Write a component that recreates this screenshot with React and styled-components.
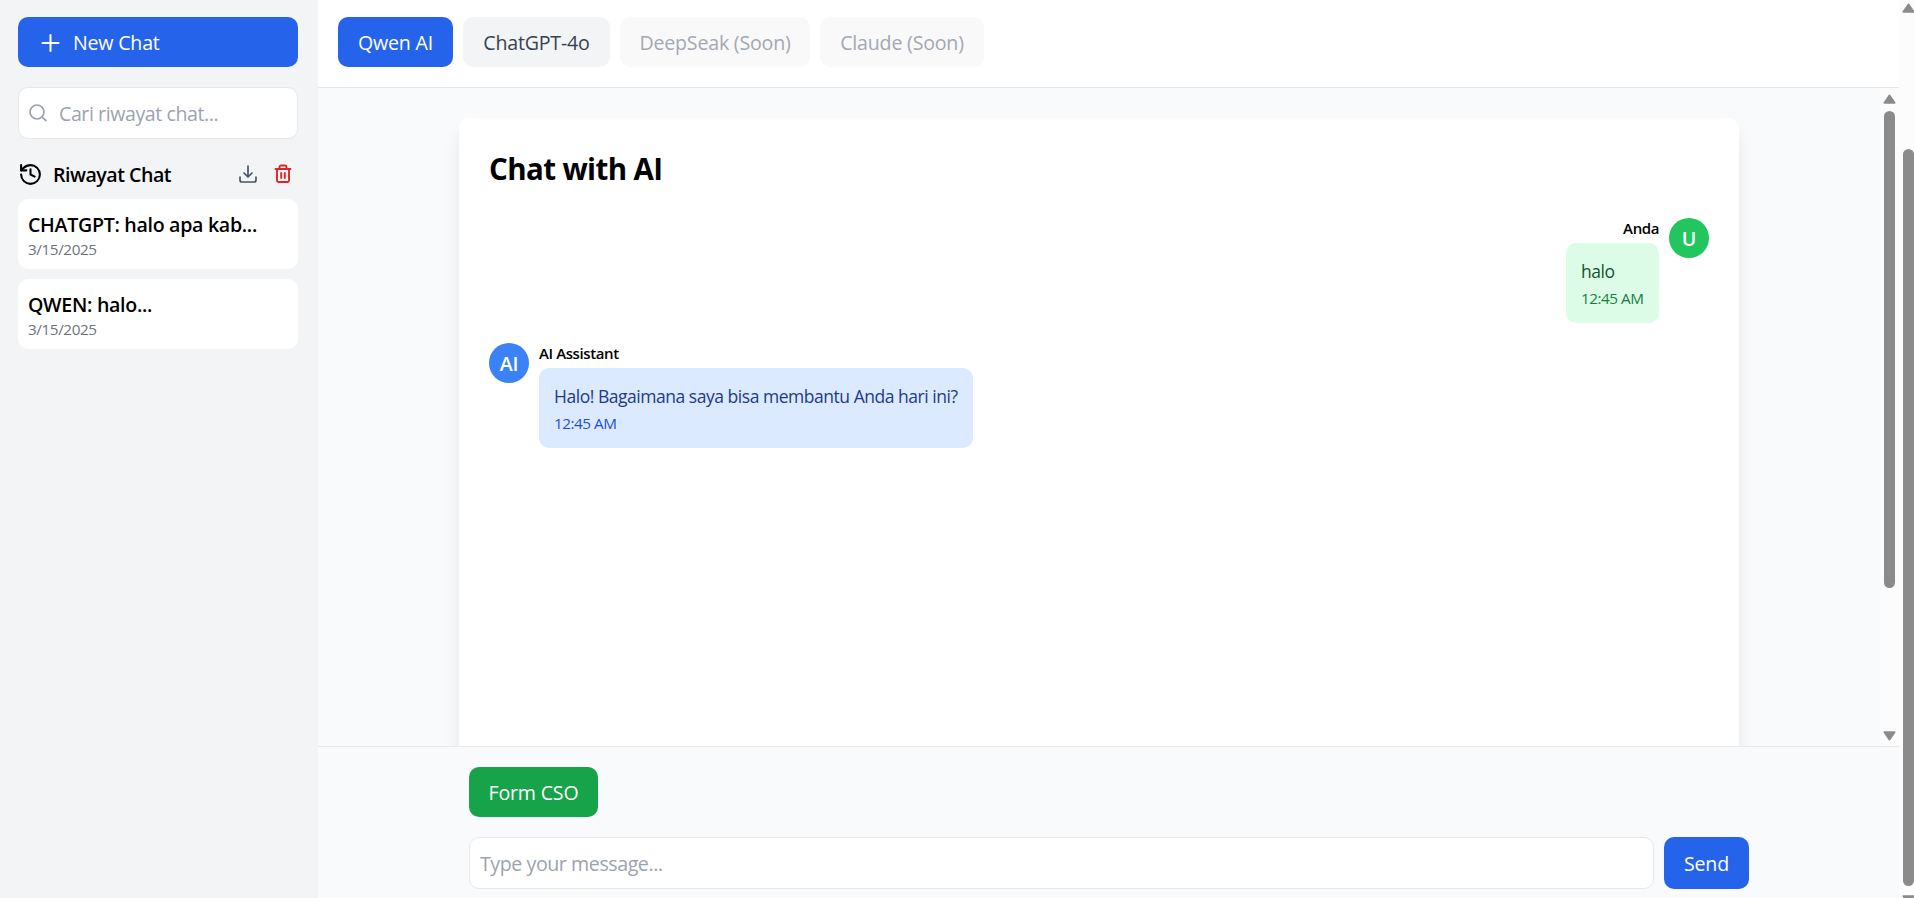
import React from 'react';
import styled, { createGlobalStyle } from 'styled-components';
import { LuHistory } from 'react-icons/lu';

const GlobalStyle = createGlobalStyle`
  *, *::before, *::after { box-sizing: border-box; }
  body { margin: 0; font-family: "Segoe UI", "Open Sans", "Noto Sans", sans-serif; font-size: 19.6px; letter-spacing: -0.2px; line-height: 1.5; color: #000; overflow: hidden; }
  button, input { font: inherit; letter-spacing: inherit; }
  h1, p { margin: 0; }
`;

const Page = styled.div`
  display: flex;
  height: 898px;
  background: #f9fafb;
`;

const Sidebar = styled.aside`
  width: 318px;
  flex: none;
  padding: 17px 20px 0 18px;
  background: #f3f4f6;
`;

const NewChatButton = styled.button`
  display: flex;
  align-items: center;
  gap: 13px;
  width: 280px;
  height: 50px;
  padding: 1px 22px 0;
  border: 0;
  border-radius: 10px;
  background: #2563eb;
  color: #fff;
  text-align: left;
`;

const SearchBox = styled.label`
  display: flex;
  align-items: center;
  gap: 11px;
  width: 280px;
  height: 52px;
  margin-top: 20px;
  padding: 0 9px;
  border: 1px solid #e5e7eb;
  border-radius: 10px;
  background: #fff;
  color: #9ca3af;
`;

const PlainInput = styled.input`
  flex: 1;
  min-width: 0;
  padding: 2px 0 0;
  border: 0;
  outline: 0;
  background: transparent;
  letter-spacing: -0.43px;
  &::placeholder { color: #9ca3af; opacity: 1; }
`;

const HistoryHeader = styled.div`
  display: flex;
  align-items: center;
  height: 40px;
  margin-top: 15px;
  padding-right: 5px;
`;

const HistoryTitle = styled.span`
  flex: 1;
  margin-left: 10px;
  padding-top: 2px;
  font-weight: 600;
  letter-spacing: -0.5px;
`;

const IconButton = styled.button`
  display: flex;
  width: 20px;
  height: 20px;
  margin-left: 15px;
  padding: 0;
  border: 0;
  background: none;
  color: ${(p) => p.$color};
`;

const HistoryList = styled.div`
  display: flex;
  flex-direction: column;
  gap: 10px;
  margin-top: 5px;
`;

const HistoryItem = styled.div`
  width: 280px;
  height: 70px;
  padding: 12px 10px 0;
  border-radius: 10px;
  background: #fff;
`;

const ItemTitle = styled.div`
  font-weight: 600;
  line-height: 28px;
  letter-spacing: -0.3px;
`;

const ItemDate = styled.div`
  font-size: 15.3px;
  line-height: 20px;
  letter-spacing: -0.42px;
  color: #6b7280;
`;

const Main = styled.main`
  flex: 1;
  min-width: 0;
  display: flex;
  flex-direction: column;
`;

const ModelBar = styled.nav`
  display: flex;
  gap: 10px;
  height: 88px;
  flex: none;
  padding: 17px 20px 0;
  border-bottom: 1px solid #e5e7eb;
  background: #fff;
`;

const ModelButton = styled.button`
  width: ${(p) => p.$width}px;
  height: 50px;
  padding: 2px 0 0;
  border: 0;
  border-radius: 10px;
  white-space: nowrap;
  background: ${(p) => (p.$active ? '#2563eb' : p.disabled ? '#f9f9f9' : '#f3f4f6')};
  color: ${(p) => (p.$active ? '#fff' : p.disabled ? '#a3a8b2' : '#374151')};
`;

const ScrollArea = styled.section`
  display: flex;
  flex: 1;
  min-height: 0;
  overflow: hidden;
`;

const ChatColumn = styled.div`
  flex: 1;
  padding: 30px 141px 0;
  overflow: hidden;
`;

const ChatCard = styled.div`
  width: 1280px;
  height: 720px;
  padding: 30px;
  border-radius: 10px;
  background: #fff;
  box-shadow: 0 12.5px 18.75px -3.75px rgba(0,0,0,.1), 0 5px 7.5px -5px rgba(0,0,0,.1);
`;

const Title = styled.h1`
  padding-top: 1px;
  font-size: 29.5px;
  line-height: 40px;
  font-weight: 700;
  height: 40px;
  letter-spacing: -0.6px;
`;

const Message = styled.article`
  display: flex;
  flex-direction: ${(p) => (p.$own ? 'row-reverse' : 'row')};
  gap: 10px;
  height: 105px;
  margin-top: ${(p) => (p.$own ? 30 : 20)}px;
`;

const Avatar = styled.div`
  display: flex;
  align-items: center;
  justify-content: center;
  width: 40px;
  height: 40px;
  padding-top: 1px;
  border-radius: 50%;
  background: ${(p) => (p.$own ? '#22c55e' : '#3b82f6')};
  color: #fff;
  font-weight: 600;
`;

const MessageBody = styled.div`
  display: flex;
  flex-direction: column;
  align-items: ${(p) => (p.$own ? 'flex-end' : 'flex-start')};
`;

const Sender = styled.div`
  height: 25px;
  font-size: 15px;
  line-height: 21px;
  font-weight: 600;
  letter-spacing: -0.4px;
`;

const Bubble = styled.div`
  width: ${(p) => (p.$own ? 93 : 434)}px;
  height: 80px;
  padding: 14px 15px 0;
  border-radius: 10px;
  white-space: nowrap;
  background: ${(p) => (p.$own ? '#dcfce7' : '#dbeafe')};
  color: ${(p) => (p.$own ? '#14532d' : '#1e3a8a')};
`;

const BubbleText = styled.p`
  font-size: 17.5px;
  line-height: 28px;
  letter-spacing: -0.47px;
`;

const BubbleTime = styled.p`
  margin-top: 3px;
  font-size: 15.3px;
  line-height: 20px;
  letter-spacing: -0.48px;
  color: ${(p) => (p.$own ? '#15803d' : '#1d4ed8')};
`;

const ScrollTrack = styled.div`
  display: flex;
  flex-direction: column;
  align-items: center;
  flex: none;
  width: ${(p) => (p.$outer ? 15 : 19)}px;
  padding-top: ${(p) => (p.$outer ? 3 : 6)}px;
  padding-left: ${(p) => (p.$outer ? 4 : 0)}px;
  background: #fcfcfc;
  overflow: hidden;
`;

const ScrollThumb = styled.div`
  flex: none;
  width: 11px;
  height: ${(p) => p.$height}px;
  margin: ${(p) => p.$before}px 0 ${(p) => p.$after}px;
  border-radius: 6px;
  background: #8b8b8b;
`;

const ArrowIcon = styled.svg`
  flex: none;
`;

const Composer = styled.footer`
  flex: none;
  height: 152px;
  padding: 20px 0 0 151px;
  border-top: 1px solid #e5e7eb;
`;

const FormButton = styled.button`
  display: block;
  width: 129px;
  height: 50px;
  padding: 2px 0 0;
  border: 0;
  border-radius: 10px;
  background: #16a34a;
  color: #fff;
`;

const ComposeRow = styled.div`
  display: flex;
  gap: 10px;
  margin-top: 20px;
`;

const MessageField = styled.label`
  display: flex;
  align-items: center;
  width: 1185px;
  height: 52px;
  padding: 0 10px;
  border: 1px solid #e5e7eb;
  border-radius: 10px;
  background: #fff;
`;

const SendButton = styled.button`
  width: 85px;
  height: 52px;
  padding: 2px 0 0;
  border: 0;
  border-radius: 10px;
  background: #2563eb;
  color: #fff;
`;

const models = [
  { name: 'Qwen AI', width: 115, active: true },
  { name: 'ChatGPT-4o', width: 147 },
  { name: 'DeepSeak (Soon)', width: 190, disabled: true },
  { name: 'Claude (Soon)', width: 164, disabled: true },
];

const history = [
  { title: 'CHATGPT: halo apa kab...', date: '3/15/2025' },
  { title: 'QWEN: halo...', date: '3/15/2025' },
];

const Arrow = ({ down }) => (
  <ArrowIcon width="13" height="10" viewBox="0 0 13 10">
    <path
      d={down ? 'M1.500 1.200h10L6.500 8.500z' : 'M1.500 8.800h10L6.500 1.500z'}
      fill="#8b8b8b" stroke="#8b8b8b" strokeWidth="2" strokeLinejoin="round"
    />
  </ArrowIcon>
);

const Glyph = ({ children, width = 1.7 }) => (
  <svg width="20" height="20" viewBox="0 0 20 20" fill="none" stroke="currentColor"
    strokeWidth={width} strokeLinecap="round" strokeLinejoin="round">{children}</svg>
);

export default function App() {
  return (
    <>
      <GlobalStyle />
      <Page>
        <Sidebar>
          <NewChatButton>
            <Glyph width={2}><path d="M10.500 2v16M2.500 10h16" /></Glyph>
            <span>New Chat</span>
          </NewChatButton>
          <SearchBox>
            <Glyph><circle cx="9" cy="9" r="7" /><path d="M14.300 14.300L18 17.500" /></Glyph>
            <PlainInput placeholder="Cari riwayat chat..." />
          </SearchBox>
          <HistoryHeader>
            <LuHistory size={25} />
            <HistoryTitle>Riwayat Chat</HistoryTitle>
            <IconButton $color="#4b5563">
              <Glyph><path d="M10 2v10.500M6 9l4 4 4-4M2 13v3a2 2 0 0 0 2 2h12a2 2 0 0 0 2-2v-3" /></Glyph>
            </IconButton>
            <IconButton $color="#dc2626">
              <Glyph width={1.9}><path d="M2.500 5h15M4 5v11.500A1.500 1.500 0 0 0 5.500 18h9a1.500 1.500 0 0 0 1.500-1.500V5M6.500 5V3A1.500 1.500 0 0 1 8 1.500h4A1.500 1.500 0 0 1 13.500 3v2M8.200 9v5M11.800 9v5" /></Glyph>
            </IconButton>
          </HistoryHeader>
          <HistoryList>
            {history.map((h) => (
              <HistoryItem key={h.title}>
                <ItemTitle>{h.title}</ItemTitle>
                <ItemDate>{h.date}</ItemDate>
              </HistoryItem>
            ))}
          </HistoryList>
        </Sidebar>
        <Main>
          <ModelBar>
            {models.map((m) => (
              <ModelButton key={m.name} $width={m.width} $active={m.active} disabled={m.disabled}>{m.name}</ModelButton>
            ))}
          </ModelBar>
          <ScrollArea>
            <ChatColumn>
              <ChatCard>
                <Title>Chat with AI</Title>
                <Message $own>
                  <Avatar $own>U</Avatar>
                  <MessageBody $own>
                    <Sender>Anda</Sender>
                    <Bubble $own>
                      <BubbleText>halo</BubbleText>
                      <BubbleTime $own>12:45 AM</BubbleTime>
                    </Bubble>
                  </MessageBody>
                </Message>
                <Message>
                  <Avatar>AI</Avatar>
                  <MessageBody>
                    <Sender>AI Assistant</Sender>
                    <Bubble>
                      <BubbleText>Halo! Bagaimana saya bisa membantu Anda hari ini?</BubbleText>
                      <BubbleTime>12:45 AM</BubbleTime>
                    </Bubble>
                  </MessageBody>
                </Message>
              </ChatCard>
            </ChatColumn>
            <ScrollTrack>
              <Arrow />
              <ScrollThumb $height={477} $before={7} $after={143} />
              <Arrow down />
            </ScrollTrack>
          </ScrollArea>
          <Composer>
            <FormButton>Form CSO</FormButton>
            <ComposeRow>
              <MessageField><PlainInput placeholder="Type your message..." /></MessageField>
              <SendButton>Send</SendButton>
            </ComposeRow>
          </Composer>
        </Main>
        <ScrollTrack $outer>
          <Arrow />
          <ScrollThumb $height={737} $before={136} $after={9} />
          <Arrow down />
        </ScrollTrack>
      </Page>
    </>
  );
}
